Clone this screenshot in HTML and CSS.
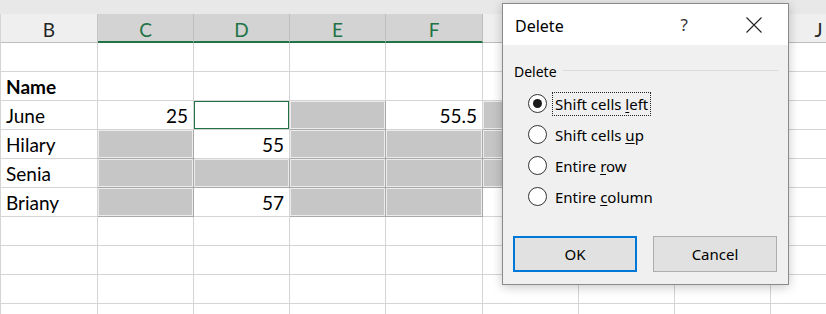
FILE: index.html
```html
<!DOCTYPE html>
<html>
<head>
<meta charset="utf-8">
<link rel="stylesheet" href="styles.css">
</head>
<body>
<div class="app">
  <div class="topstrip"></div>
  <div class="sheet">
    <div class="hd">B</div><div class="hd sel">C</div><div class="hd sel">D</div><div class="hd sel">E</div><div class="hd sel">F</div><div class="hd"></div><div class="hd"></div><div class="hd"></div><div class="hd">J</div>

    <div class="c"></div><div class="c"></div><div class="c"></div><div class="c"></div><div class="c"></div><div class="c"></div><div class="c"></div><div class="c"></div><div class="c"></div>

    <div class="c bold">Name</div><div class="c"></div><div class="c"></div><div class="c"></div><div class="c"></div><div class="c"></div><div class="c"></div><div class="c"></div><div class="c"></div>

    <div class="c">June</div><div class="c num">25</div><div class="c active"></div><div class="c g"></div><div class="c num">55.5</div><div class="c g"></div><div class="c"></div><div class="c"></div><div class="c"></div>

    <div class="c">Hilary</div><div class="c g"></div><div class="c num">55</div><div class="c g"></div><div class="c g"></div><div class="c g"></div><div class="c"></div><div class="c"></div><div class="c"></div>

    <div class="c">Senia</div><div class="c g"></div><div class="c g"></div><div class="c g"></div><div class="c g"></div><div class="c g"></div><div class="c"></div><div class="c"></div><div class="c"></div>

    <div class="c">Briany</div><div class="c g"></div><div class="c num">57</div><div class="c g"></div><div class="c g"></div><div class="c"></div><div class="c"></div><div class="c"></div><div class="c"></div>

    <div class="c"></div><div class="c"></div><div class="c"></div><div class="c"></div><div class="c"></div><div class="c"></div><div class="c"></div><div class="c"></div><div class="c"></div>
    <div class="c"></div><div class="c"></div><div class="c"></div><div class="c"></div><div class="c"></div><div class="c"></div><div class="c"></div><div class="c"></div><div class="c"></div>
    <div class="c"></div><div class="c"></div><div class="c"></div><div class="c"></div><div class="c"></div><div class="c"></div><div class="c"></div><div class="c"></div><div class="c"></div>
    <div class="c"></div><div class="c"></div><div class="c"></div><div class="c"></div><div class="c"></div><div class="c"></div><div class="c"></div><div class="c"></div><div class="c"></div>
  </div>

  <div class="dialog">
    <div class="titlebar">
      <span class="title">Delete</span>
      <span class="help">?</span>
      <svg class="close" width="16" height="16" viewBox="0 0 16 16"><path d="M0.5 0.5 L15.5 15.5 M15.5 0.5 L0.5 15.5" stroke="#222" stroke-width="1.1" fill="none"/></svg>
    </div>
    <div class="dbody">
      <div class="grouphead"><span>Delete</span><div class="rule"></div></div>
      <div class="options">
        <div class="opt"><span class="radio on"></span><span class="lbl focus">Shift cells <u>l</u>eft</span></div>
        <div class="opt"><span class="radio"></span><span class="lbl">Shift cells <u>u</u>p</span></div>
        <div class="opt"><span class="radio"></span><span class="lbl">Entire <u>r</u>ow</span></div>
        <div class="opt"><span class="radio"></span><span class="lbl">Entire <u>c</u>olumn</span></div>
      </div>
      <div class="buttons">
        <div class="btn primary">OK</div>
        <div class="btn">Cancel</div>
      </div>
    </div>
  </div>
</div>
</body>
</html>
```

FILE: styles.css
```css
* { box-sizing: border-box; }
html, body { margin: 0; padding: 0; }
body { width: 826px; height: 314px; overflow: hidden; background: #fff; }
.app { position: relative; width: 826px; height: 314px; overflow: hidden; }
.topstrip { height: 14px; background: #e8e8e8; }
.sheet {
  display: grid;
  grid-template-columns: 97px 96px 96px 96px 97px 96px 96px 96px 96px;
  grid-auto-rows: 29px;
  border-left: 1px solid #d4d4d4;
  width: 868px;
  font-family: Lato, "Open Sans", sans-serif;
  font-size: 19px;
  color: #000;
}
.hd {
  background: #efefef;
  border-right: 1px solid #c6c6c6;
  border-bottom: 1px solid #bdbdbd;
  display: flex; align-items: center; justify-content: center;
  color: #262626;
  font-size: 19px;
  padding-top: 3px;
}
.hd.sel { background: #d3d3d3; color: #217346; border-bottom: 2px solid #217346; border-right-color: #bdbdbd; }
.c {
  border-right: 1px solid #d4d4d4;
  border-bottom: 1px solid #d4d4d4;
  display: flex; align-items: flex-end;
  padding: 0 5px 2px 5px;
  white-space: nowrap;
}
.bold { font-weight: 700; }
.num { justify-content: flex-end; }
.g { background: #c6c6c6; border-color: #a9a9a9; box-shadow: inset 0 0 0 1px #ececec; }
.active { box-shadow: inset 1px 1px 0 #217346, inset -1px -1px 0 #217346, inset 0 0 0 2px #fff; outline: 1px solid #fff; outline-offset: -3px; }

.dialog {
  position: absolute; left: 502px; top: 3px; width: 287px; height: 282px;
  border: 1px solid #8a8a8a;
  background: #f0f0f0;
  box-shadow: 0 2px 10px rgba(0,0,0,0.22);
  font-family: "Noto Sans", "Open Sans", sans-serif;
  color: #000;
  display: flex; flex-direction: column;
}
.titlebar {
  height: 41px; background: #fff;
  display: flex; align-items: center;
  padding-left: 12px;
}
.title { font-size: 16px; margin-right: auto; padding-top: 2px; }
.help { font-size: 17px; color: #333; margin-right: 58px; }
.close { margin-right: 26px; }
.dbody { padding: 0 10px 0 11px; display: flex; flex-direction: column; }
.grouphead { margin-top: 16px; height: 20px; display: flex; align-items: center; font-size: 14px; }
.rule { flex: 1; height: 1px; background: #dadada; margin-left: 6px; margin-top: -1px; }
.options { margin-top: 7px; padding-left: 14px; display: flex; flex-direction: column; }
.opt { height: 31px; display: flex; align-items: center; font-size: 15px; }
.radio {
  width: 19px; height: 19px; border-radius: 50%;
  border: 1.5px solid #333; background: #fff;
  display: flex; align-items: center; justify-content: center;
  margin-right: 5px; flex-shrink: 0;
}
.radio.on::after { content: ""; width: 9px; height: 9px; border-radius: 50%; background: #1a1a1a; }
.lbl { padding: 1px 2px; border: 1px solid transparent; line-height: 20px; }
.lbl u { text-decoration-thickness: 1px; text-underline-offset: 2px; }
.focus { border: 1px dotted #222; }
.buttons { margin-top: 24px; margin-left: -1px; display: flex; gap: 16px; }
.btn {
  width: 124px; height: 36px;
  background: #e1e1e1; border: 1px solid #adadad;
  display: flex; align-items: center; justify-content: center;
  font-size: 15px;
}
.btn.primary { border: 2px solid #0078d7; }
```
